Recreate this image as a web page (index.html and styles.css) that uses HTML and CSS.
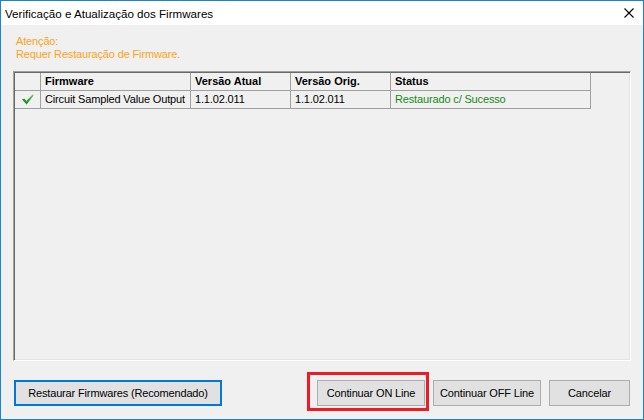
FILE: index.html
```html
<!DOCTYPE html>
<html lang="pt">
<head>
  <meta charset="UTF-8" />
  <title>Verificação e Atualização dos Firmwares</title>
  <link rel="stylesheet" href="styles.css">
</head>
<body>
<div class="window">
  <div class="titlebar">
    <span class="title">Verificação e Atualização dos Firmwares</span>
    <svg class="close" width="10" height="10" viewBox="0 0 10 10">
      <path d="M0.5 0.5 L9.5 9.5 M9.5 0.5 L0.5 9.5" stroke="#000" stroke-width="1.1" fill="none"/>
    </svg>
  </div>

  <div class="content">
    <div class="notice">
      <div>Atenção:</div>
      <div>Requer Restauração de Firmware.</div>
    </div>

    <div class="grid">
      <div class="grid-rows">
        <div class="cell rowhead"></div>
        <div class="cell head">Firmware</div>
        <div class="cell head">Versão Atual</div>
        <div class="cell head">Versão Orig.</div>
        <div class="cell head">Status</div>

        <div class="cell rowhead">
          <svg width="12" height="11" viewBox="0 0 12 11">
            <defs>
              <linearGradient id="ok" x1="0" y1="1" x2="1" y2="0">
                <stop offset="0" stop-color="#1d7d22"/>
                <stop offset="0.5" stop-color="#2f9e33"/>
                <stop offset="1" stop-color="#7cc86c"/>
              </linearGradient>
            </defs>
            <path d="M0 5.5 L2.2 4.4 L4.4 7 L10.6 0.4 L11.6 1.4 L4.6 10.4 Z" fill="url(#ok)"/>
          </svg>
        </div>
        <div class="cell">Circuit Sampled Value Output</div>
        <div class="cell">1.1.02.011</div>
        <div class="cell">1.1.02.011</div>
        <div class="cell status-ok">Restaurado c/ Sucesso</div>
      </div>
    </div>

    <div class="actions">
      <button class="btn btn-default wide">Restaurar Firmwares (Recomendado)</button>
      <div class="actions-right">
        <button class="btn mid">Continuar ON Line</button>
        <button class="btn mid">Continuar OFF Line</button>
        <button class="btn small">Cancelar</button>
      </div>
    </div>
  </div>

  <div class="highlight"></div>
</div>
</body>
</html>
```

FILE: styles.css
```css
body { margin: 0; background: #fff; font-family: "Liberation Sans", Arial, sans-serif; font-size: 11px; letter-spacing: -0.15px; color: #000; }

.window { position: relative; box-sizing: border-box; width: 644px; height: 420px; border: 1px solid #1883d7; display: flex; flex-direction: column; }

.titlebar { height: 24px; background: #fff; display: flex; align-items: center; justify-content: space-between; padding: 0 9px 0 4px; }
.title { font-family: "Liberation Sans", Arial, sans-serif; font-size: 11.6px; letter-spacing: 0; color: #000; }
.close { display: block; }

.content { flex: 1; background: #f0f0f0; display: flex; flex-direction: column; padding: 10px 12px 13px 12px; }

.notice { color: #ffa31a; line-height: 13px; padding-left: 3px; }

.grid { margin-top: 10px; height: 290px; box-sizing: border-box; border-top: 1px solid #a0a0a0; border-left: 1px solid #a0a0a0; border-right: 1px solid #fff; border-bottom: 1px solid #fff; box-shadow: inset 1px 1px 0 #696969, inset -1px -1px 0 #e3e3e3; padding: 1px; }
.grid-rows { display: grid; grid-template-columns: 26px 150px 100px 100px 200px; grid-auto-rows: 18px; }
.cell { box-sizing: border-box; border-right: 1px solid #a0a0a0; border-bottom: 1px solid #a0a0a0; padding: 0 0 0 4px; line-height: 17px; white-space: nowrap; overflow: hidden; }
.head { font-weight: bold; letter-spacing: 0; }
.rowhead { padding: 0; display: flex; align-items: center; justify-content: center; }
.rowhead svg { margin-left: 1px; }
.status-ok { color: #158a15; }

.actions { margin-top: 19px; display: flex; justify-content: space-between; padding: 0 1px; }
.actions-right { display: flex; gap: 8px; }
.btn { height: 26px; box-sizing: border-box; background: #e1e1e1; border: 1px solid #adadad; font-family: "Liberation Sans", Arial, sans-serif; font-size: 11px; letter-spacing: -0.15px; color: #000; padding: 0; }
.btn-default { border: 2px solid #0078d7; }
.wide { width: 208px; }
.mid { width: 108px; }
.small { width: 81px; }

.highlight { position: absolute; left: 306px; top: 371px; width: 122px; height: 39px; border: 3px solid #ed1c24; box-sizing: border-box; }
```
